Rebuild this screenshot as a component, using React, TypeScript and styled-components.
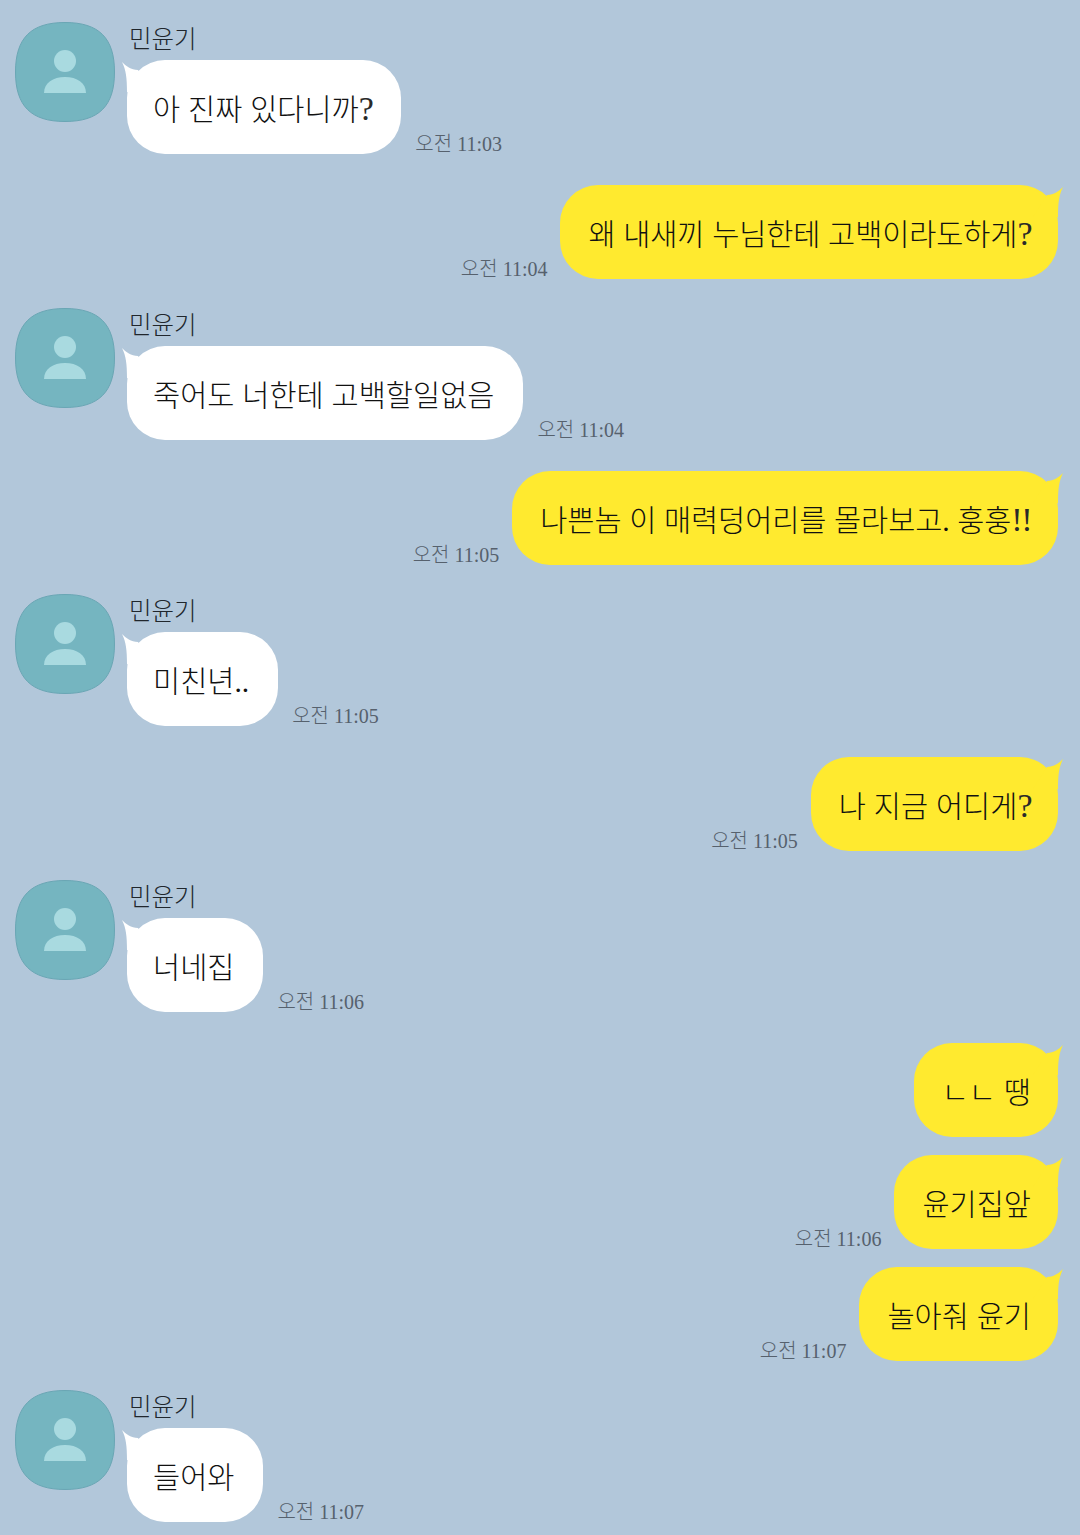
import React from "react"
import styled, { createGlobalStyle } from "styled-components"

const GlobalStyle = createGlobalStyle`
  html, body {
    margin: 0;
    padding: 0;
    background: #b2c7da;
  }
  body {
    font-family: "Liberation Serif", "Noto Sans CJK KR", serif;
  }
`

const Chat = styled.div`
  width: 1080px;
  height: 1535px;
  box-sizing: border-box;
  overflow: hidden;
  padding-top: 22px;
  display: flex;
  flex-direction: column;
  background: #b2c7da;
`

const IncomingRow = styled.div`
  display: flex;
  align-items: flex-start;
  padding-left: 15px;
  margin-bottom: 31px;
`

const OutgoingRow = styled.div<{ $last?: boolean }>`
  display: flex;
  justify-content: flex-end;
  align-items: flex-end;
  padding-right: 22px;
  margin-bottom: ${p => (p.$last ? 29 : 18)}px;
`

const AvatarIcon = styled.svg`
  width: 100px;
  height: 100px;
  flex: none;
`

const Body = styled.div`
  margin-left: 12px;
  display: flex;
  flex-direction: column;
  align-items: flex-start;
`

const Name = styled.div`
  height: 38px;
  padding-left: 2px;
  font-size: 24.500px;
  line-height: 35px;
  font-weight: 300;
  color: #20262c;
`

const BubbleLine = styled.div`
  display: flex;
  align-items: flex-end;
`

const Bubble = styled.div<{ $mine?: boolean }>`
  position: relative;
  height: 94px;
  box-sizing: border-box;
  padding: ${p => (p.$mine ? "5px 27px 0 28px" : "5px 29px 0 26px")};
  display: flex;
  align-items: center;
  border-radius: 38px;
  background: ${p => (p.$mine ? "#ffea2f" : "#ffffff")};
`

const Message = styled.span<{ $tight?: boolean }>`
  color: #111111;
  font-size: 29.500px;
  font-weight: 300;
  line-height: 40px;
  word-spacing: 0.500px;
  letter-spacing: ${p => (p.$tight ? "-0.100px" : "0")};
  white-space: pre;
`

// the thin tall question and exclamation marks sit larger than the hangul
const Mark = styled.span`
  font-size: 34px;
  line-height: 30px;
  font-weight: 400;
  letter-spacing: -1.500px;
  color: #2a2a2a;
`

const Tail = styled.svg<{ $mine?: boolean }>`
  position: absolute;
  top: 2px;
  width: 30px;
  height: 30px;
  ${p => (p.$mine ? "right: -5px;" : "left: -5px;")}
`

const Time = styled.div<{ $mine?: boolean }>`
  font-size: 20px;
  line-height: 20px;
  font-weight: 300;
  color: #56616d;
  white-space: nowrap;
  ${p => (p.$mine ? "margin-right: 13px;" : "margin-left: 14px;")}
`

function Avatar() {
  return (
    <AvatarIcon viewBox="0 0 100 100">
      <path
        d="M50 .5C84 .5 99.500 16 99.500 50S84 99.500 50 99.500.5 84 .5 50 16 .5 50 .5Z"
        fill="#75b5c0"
        stroke="#6aa6b4"
      />
      <circle cx="50" cy="39" r="11" fill="#a9dae0" />
      <path d="M29 71C29 61 38 55 50 55S71 61 71 71Z" fill="#a9dae0" />
    </AvatarIcon>
  )
}

// trailing ? and ! get their own span
function MessageText({ text, tight }: { text: string; tight?: boolean }) {
  const body = text.replace(/[?!]+$/, "")
  const marks = text.slice(body.length)
  return (
    <Message $tight={tight}>
      {body}
      {marks && <Mark>{marks}</Mark>}
    </Message>
  )
}

function Incoming({ text, time }: { text: string; time: string }) {
  return (
    <IncomingRow>
      <Avatar />
      <Body>
        <Name>민윤기</Name>
        <BubbleLine>
          <Bubble>
            <Tail viewBox="0 0 30 30">
              <path d="M0 0C4 4 9 8 16 8L30 30H5C5 16 4 8 0 0Z" fill="#ffffff" />
            </Tail>
            <MessageText text={text} />
          </Bubble>
          <Time>{time}</Time>
        </BubbleLine>
      </Body>
    </IncomingRow>
  )
}

type OutgoingProps = { text: string; time?: string; last?: boolean; tight?: boolean }

function Outgoing({ text, time, last, tight }: OutgoingProps) {
  return (
    <OutgoingRow $last={last}>
      {time && <Time $mine>{time}</Time>}
      <Bubble $mine>
        <Tail $mine viewBox="0 0 30 30">
          <path d="M30 0C26 4 21 8 14 8L0 30H25C25 16 26 8 30 0Z" fill="#ffea2f" />
        </Tail>
        <MessageText text={text} tight={tight} />
      </Bubble>
    </OutgoingRow>
  )
}

export default function App() {
  return (
    <Chat>
      <GlobalStyle />
      <Incoming text="아 진짜 있다니까?" time="오전 11:03" />
      <Outgoing text="왜 내새끼 누님한테 고백이라도하게?" time="오전 11:04" last tight />
      <Incoming text="죽어도 너한테 고백할일없음" time="오전 11:04" />
      <Outgoing text="나쁜놈 이 매력덩어리를 몰라보고. 훙훙!!" time="오전 11:05" last tight />
      <Incoming text="미친년.." time="오전 11:05" />
      <Outgoing text="나 지금 어디게?" time="오전 11:05" last />
      <Incoming text="너네집" time="오전 11:06" />
      <Outgoing text="ㄴㄴ 땡" />
      <Outgoing text="윤기집앞" time="오전 11:06" />
      <Outgoing text="놀아줘 윤기" time="오전 11:07" last />
      <Incoming text="들어와" time="오전 11:07" />
    </Chat>
  )
}
